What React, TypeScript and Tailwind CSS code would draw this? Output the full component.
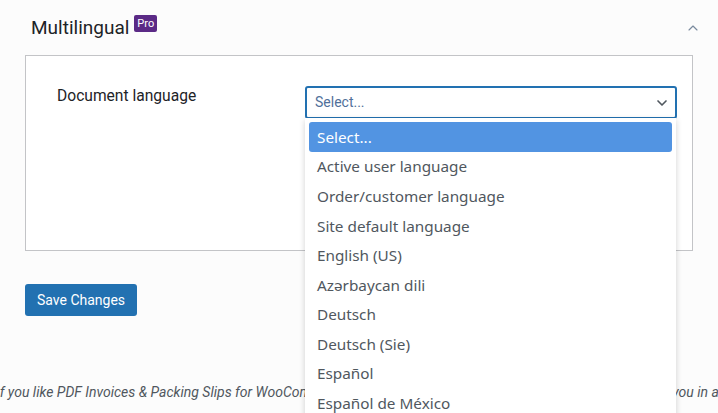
import { ChevronDown, ChevronUp } from "lucide-react";

const OPTIONS = [
  "Select...",
  "Active user language",
  "Order/customer language",
  "Site default language",
  "English (US)",
  "Azərbaycan dili",
  "Deutsch",
  "Deutsch (Sie)",
  "Español",
  "Español de México",
  "Français",
];

export default function App() {
  return (
    <div className="relative h-[413px] w-[718px] overflow-hidden bg-[#fcfcfc] font-['Roboto',sans-serif] text-[#1d2327]">
      <div className="px-[25px]">
        {/* header */}
        <div className="flex h-[55px] items-center justify-between pl-[6px]">
          <div className="flex items-start">
            <span className="text-[19px] leading-none text-[#1d2327]">Multilingual</span>
            <span className="ml-[5px] -mt-[3px] rounded-[2px] bg-[#5b2a86] px-[3px] text-[11px] leading-[17px] text-white">
              Pro
            </span>
          </div>
          <ChevronUp className="-mr-[8px] h-[16px] w-[16px] text-[#7a8a9e]" strokeWidth={1.75} />
        </div>

        {/* panel */}
        <div className="h-[196px] border border-[#c3c4c7] bg-white">
          <div className="flex pl-[31px] pt-[30px]">
            <div className="w-[248px] text-[15.6px] leading-[20px] text-[#1d2327]">Document language</div>
            <div className="relative w-[372px]">
              <div className="flex h-[33px] items-center justify-between rounded-[3px] border-2 border-[#2271b1] pl-[8px] pr-[5px]">
                <span className="text-[14px] text-[#50709a]">Select...</span>
                <ChevronDown className="h-[16px] w-[16px] text-[#50575e]" strokeWidth={2.5} />
              </div>
              {/* dropdown */}
              <div className="absolute left-0 top-[32px] z-10 w-[371px] rounded-b-[4px] bg-white px-[4px] pt-[4px] font-['Noto_Sans',sans-serif] shadow-[0_2px_6px_rgba(0,0,0,0.18)]">
                {OPTIONS.map((o, i) => (
                  <div
                    key={o}
                    className={
                      i === 0
                        ? "flex h-[30px] items-center rounded-[3px] bg-[#5294e2] px-[8px] text-[15.3px] text-white"
                        : "flex h-[29.6px] items-center px-[8px] text-[15.3px] text-[#50575e]"
                    }
                  >
                    {o}
                  </div>
                ))}
              </div>
            </div>
          </div>
        </div>

        {/* save */}
        <div className="pt-[33px]">
          <button className="h-[32px] rounded-[3px] bg-[#2271b1] px-[12px] text-[14px] text-white">
            Save Changes
          </button>
        </div>
      </div>

      {/* footer */}
      <div className="mt-[66px] ml-[-4px] whitespace-nowrap text-[14px] italic text-[#50575e]">
        If you like PDF Invoices &amp; Packing Slips for WooCommerce please leave us a rating on WordPress.org. We thank you in advance!
      </div>
    </div>
  );
}
